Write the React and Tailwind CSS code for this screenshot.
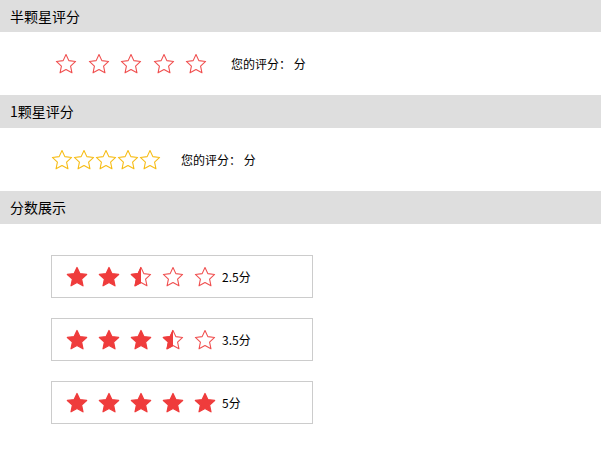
import React from 'react'

const STAR = '12,1.6 15.1,8.3 22.5,9.2 17,14.3 18.5,21.6 12,18 5.5,21.6 7,14.3 1.5,9.2 8.9,8.3'

const Star = ({ type = 'empty', color = '#f05050', size = 22 }) => {
  const id = React.useId().replace(/:/g, '')
  return (
    <svg width={size} height={size} viewBox='0 0 24 24' className='shrink-0'>
      {type === 'full' && <polygon points={STAR} fill='#ef3c3c' stroke='#ef3c3c' strokeWidth='1.4' strokeLinejoin='round' />}
      {type === 'empty' && <polygon points={STAR} fill='none' stroke={color} strokeWidth='1.2' strokeLinejoin='round' />}
      {type === 'half' && (
        <>
          <defs>
            <clipPath id={id}><rect x='0' y='0' width='12' height='24' /></clipPath>
          </defs>
          <polygon points={STAR} fill='none' stroke='#f05050' strokeWidth='1.2' strokeLinejoin='round' />
          <polygon points={STAR} fill='#ef3c3c' stroke='#ef3c3c' strokeWidth='1.4' strokeLinejoin='round' clipPath={`url(#${id})`} />
        </>
      )}
    </svg>
  )
}

const Bar = ({ children, h = 'h-[33px]' }) => (
  <div className={`w-[601px] ${h} bg-[#dedede] flex items-center px-[10px] text-[14px] text-black`}>
    {children}
  </div>
)

const ScoreBox = ({ score }) => {
  const stars = [1, 2, 3, 4, 5].map(n => score >= n ? 'full' : score >= n - 0.5 ? 'half' : 'empty')
  return (
    <div className='w-[262px] h-[43px] border border-[#cccccc] flex items-center pl-[14px]'>
      <div className='flex gap-[10px]'>
        {stars.map((t, i) => <Star key={i} type={t} />)}
      </div>
      <span className='ml-[6px] text-[12px] text-black'>{score}分</span>
    </div>
  )
}

export default function App() {
  return (
    <div className='w-[606px] min-h-[463px] bg-white' style={{ fontFamily: '"Noto Sans CJK SC", "Noto Sans", sans-serif' }}>
      <Bar h='h-[32px]'>半颗星评分</Bar>
      <div className='h-[63px] flex items-center pl-[55px]'>
        <div className='flex gap-[10.5px]'>
          {[0, 1, 2, 3, 4].map(i => <Star key={i} />)}
        </div>
        <span className='ml-[24px] text-[12px] text-black'>您的评分： 分</span>
      </div>
      <Bar>1颗星评分</Bar>
      <div className='h-[63px] flex items-center pl-[51px]'>
        <div className='flex'>
          {[0, 1, 2, 3, 4].map(i => <Star key={i} color='#f7bd17' />)}
        </div>
        <span className='ml-[20px] text-[12px] text-black'>您的评分： 分</span>
      </div>
      <Bar>分数展示</Bar>
      <div className='flex flex-col gap-[20px] pl-[51px] pt-[31px]'>
        <ScoreBox score={2.5} />
        <ScoreBox score={3.5} />
        <ScoreBox score={5} />
      </div>
    </div>
  )
}
